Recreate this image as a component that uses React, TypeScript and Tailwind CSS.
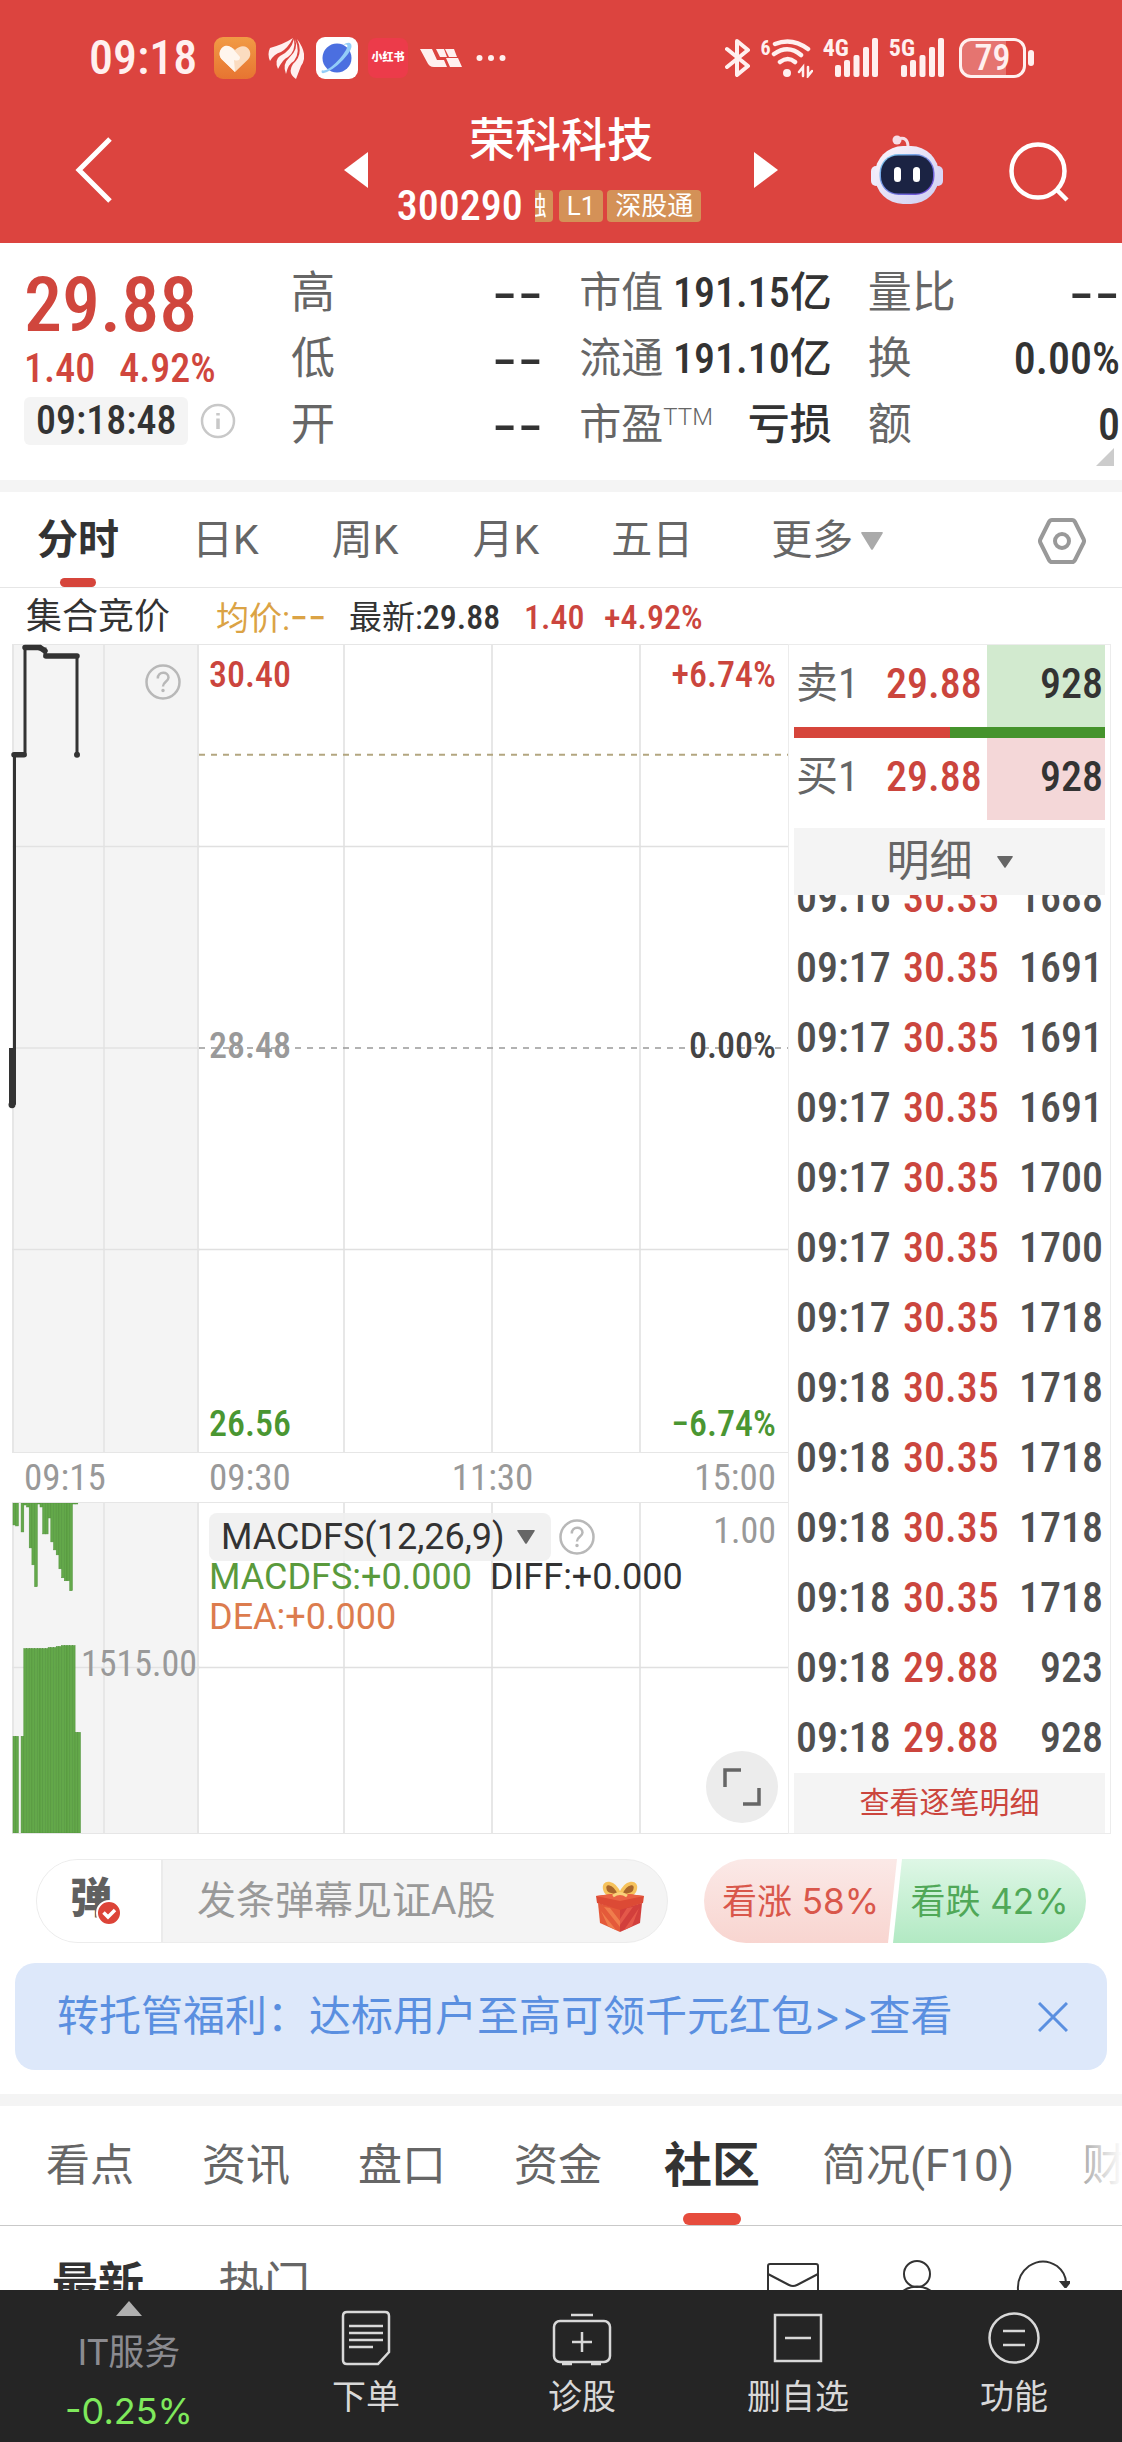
import type { ReactNode } from "react";

type QuoteItem = { label: ReactNode; value: string; dash?: boolean };

const quoteColumns: { size: string; items: QuoteItem[] }[] = [
  {
    size: "text-[44px]",
    items: [
      { label: "高", value: "--", dash: true },
      { label: "低", value: "--", dash: true },
      { label: "开", value: "--", dash: true },
    ],
  },
  {
    size: "text-[42px]",
    items: [
      { label: "市值", value: "191.15亿" },
      { label: "流通", value: "191.10亿" },
      {
        label: (
          <>
            市盈<sup className="relative top-0 align-[14px] text-2xl leading-none font-light font-['Roboto']">TTM</sup>
          </>
        ),
        value: "亏损",
      },
    ],
  },
  {
    size: "text-[44px]",
    items: [
      { label: "量比", value: "--", dash: true },
      { label: "换", value: "0.00%" },
      { label: "额", value: "0" },
    ],
  },
];

const trades: [string, string, string][] = [
  ["09:16", "30.35", "1688"],
  ["09:17", "30.35", "1691"],
  ["09:17", "30.35", "1691"],
  ["09:17", "30.35", "1691"],
  ["09:17", "30.35", "1700"],
  ["09:17", "30.35", "1700"],
  ["09:17", "30.35", "1718"],
  ["09:18", "30.35", "1718"],
  ["09:18", "30.35", "1718"],
  ["09:18", "30.35", "1718"],
  ["09:18", "30.35", "1718"],
  ["09:18", "29.88", "923"],
  ["09:18", "29.88", "928"],
];

const unmatched = [22, 23, 0, 29, 2, 4, 45, 62, 84, 1, 4, 31, 31, 15, 39, 47, 52, 66, 75, 78, 78, 88, 1, 1];
const matched = [97, 97, 0, 97, 185, 185, 185, 185, 185, 185, 185, 185, 185, 186, 186, 186, 187, 187, 188, 188, 188, 188, 188, 101, 101];

function Caret({ className }: { className: string }) {
  return (
    <svg viewBox="0 0 20 16" className={className} aria-hidden="true" preserveAspectRatio="none">
      <path d="M1 0H19Q20.500 0 19.500 1.500L11 15Q10 16.500 9 15L.5 1.500Q-.5 0 1 0Z" fill="currentColor" />
    </svg>
  );
}

function HelpIcon() {
  return (
    <svg viewBox="0 0 36 36" className="size-9" fill="none" stroke="#b8b8b8" strokeWidth="2.500" aria-hidden="true">
      <circle cx="18" cy="18" r="16.500" />
      <path d="M12.800 14.500C12.800 7 23.500 7 23.500 13.500C23.500 17.500 18 17.500 18 22.500" />
      <circle cx="18" cy="26.500" r="1" fill="#b8b8b8" strokeWidth="1.500" />
    </svg>
  );
}

function Signal({ label }: { label: string }) {
  return (
    <div className="flex h-10 items-end">
      <span className="-mr-3.5 self-start text-2xl leading-5 font-bold">{label}</span>
      <svg viewBox="0 0 44 40" className="h-10 w-11" fill="#fff0ef" aria-hidden="true">
        <rect x="0" y="27" width="6" height="12" rx="2" />
        <rect x="9" y="22" width="6" height="17" rx="2" />
        <rect x="18.500" y="17" width="6" height="22" rx="2" />
        <rect x="28" y="9" width="6" height="30" rx="2" />
        <rect x="37" y="0" width="6" height="39" rx="2" />
      </svg>
    </div>
  );
}

function StatusBar() {
  return (
    <div className="flex h-[88px] items-center justify-between pt-7 pr-[88px] pl-[89px] text-[#fff0ef]">
      <div className="flex items-center">
        <span className="w-[125px] text-5xl leading-none font-medium">09:18</span>
        <svg viewBox="0 0 42 42" className="size-[42px]" aria-hidden="true">
          <defs>
            <linearGradient id="heartBg" x1="0" y1="0" x2="0" y2="1">
              <stop offset="0" stopColor="#f19b45" />
              <stop offset="1" stopColor="#e77431" />
            </linearGradient>
          </defs>
          <rect width="42" height="42" rx="9" fill="url(#heartBg)" />
          <path d="M21 35L8 22.500C1 15 11 3 21 13C31 3 41 15 34 22.500Z" fill="#fbdcc0" />
          <path d="M21 35L8 22.500C1 15 11 3 19 12L26 20Q26 25 20 23Z" fill="#fff6ee" />
        </svg>
        <svg viewBox="0 0 36 42" className="ml-3 h-[42px] w-9" fill="#fff0ef" aria-hidden="true">
          <path d="M25 1Q16 7 2 11Q-1 17 2 24Q6 17 13 15Q20 11 25 1Z" />
          <path d="M26 2Q23 14 12 19Q6 23 10 32Q15 22 20 20Q28 14 26 2Z" />
          <path d="M27 2Q31 12 21 21Q14 27 18 37Q20 27 26 24Q33 15 27 2Z" />
          <path d="M29 2Q41 18 33 29L28 42Q19 36 25 27Q36 17 29 2Z" />
        </svg>
        <svg viewBox="0 0 42 42" className="ml-3 size-[42px]" aria-hidden="true">
          <rect width="42" height="42" rx="9" fill="#fff" />
          <circle cx="21" cy="21" r="14.500" fill="#4b6fe0" />
          <path d="M6 33Q4 38 11 35Q22 30 32 17Q38 9 34 6Q31 5 27 8Q34 6 30 13Q24 23 15 30Q8 35 6 33Z" fill="#93cdf8" />
        </svg>
        <span className="ml-2.5 flex size-10 items-center justify-center rounded-lg bg-[#ec3b4a] text-[11px] font-black text-white">
          小红书
        </span>
        <svg viewBox="0 0 42 18" className="ml-3 h-[18px] w-[42px]" fill="#fff0ef" aria-hidden="true">
          <path d="M0 0H12L17 11H24L27 18H14Q9 18 7 13Z" />
          <path d="M16 0H24L27 8H20ZM25 0H34L37 8H29ZM26 9H38L42 18H30Z" />
        </svg>
        <svg viewBox="0 0 30 8" className="ml-3.5 h-2 w-[30px]" fill="#fff0ef" aria-hidden="true">
          <circle cx="3.500" cy="4" r="3" />
          <circle cx="15" cy="4" r="3" />
          <circle cx="26.500" cy="4" r="3" />
        </svg>
      </div>
      <div className="flex items-center">
        <svg viewBox="0 0 26 40" className="h-10 w-[26px]" fill="none" stroke="#fff0ef" strokeWidth="4" strokeLinejoin="round" strokeLinecap="round" aria-hidden="true">
          <path d="M2 11L23 28L12 37V3L23 12L2 29" />
        </svg>
        <span className="ml-2.5 self-start text-xl leading-5 font-bold">6</span>
        <svg viewBox="0 0 42 40" className="h-10 w-[42px]" fill="none" stroke="#fff0ef" strokeWidth="4.500" strokeLinecap="round" aria-hidden="true">
          <path d="M4 6Q21-1 37 11M3 16Q17 6 30 17M9 24Q17 18 24 24" />
          <circle cx="16" cy="35" r="2.500" fill="#fff0ef" strokeWidth="3" />
          <path d="M28 34L32 29V38M37 29V38L41 33" strokeWidth="2.500" />
        </svg>
        <div className="ml-2.5">
          <Signal label="4G" />
        </div>
        <div className="ml-2.5">
          <Signal label="5G" />
        </div>
        <div className="ml-3.5 flex h-10 w-[67px] items-center justify-center rounded-xl border-3 border-[#fff0ef] bg-linear-to-r from-[#e57470] from-72% to-transparent to-72% text-4xl leading-none font-medium">
          79
        </div>
        <span className="ml-0.5 h-4 w-1.5 rounded-sm bg-[#fff0ef]" />
      </div>
    </div>
  );
}

function Robot() {
  return (
    <svg viewBox="0 0 72 72" className="h-[72px] w-[72px]" aria-hidden="true">
      <defs>
        <linearGradient id="shell" x1="0" y1="0" x2="1" y2="1">
          <stop offset="0" stopColor="#fdf6fb" />
          <stop offset="1" stopColor="#cdcdf2" />
        </linearGradient>
        <linearGradient id="visor" x1="0" y1="0" x2="1" y2="1">
          <stop offset="0" stopColor="#7fd3ef" />
          <stop offset="1" stopColor="#6a3bd2" />
        </linearGradient>
      </defs>
      <path d="M27 5Q37 2 37 13" fill="none" stroke="#f6dde6" strokeWidth="3" />
      <circle cx="26" cy="6" r="4.500" fill="#f6dde6" />
      <rect x="0" y="32" width="10" height="20" rx="5" fill="#eeeafa" />
      <rect x="62" y="32" width="10" height="20" rx="5" fill="#d9d6f6" />
      <rect x="4" y="12" width="64" height="58" rx="28" fill="url(#shell)" />
      <rect x="8.500" y="20" width="55" height="41" rx="19" fill="url(#visor)" />
      <rect x="10" y="21.500" width="52" height="38" rx="17" fill="#1b2343" />
      <rect x="23" y="33" width="7" height="15" rx="3.500" fill="#fff" />
      <rect x="42" y="33" width="7" height="15" rx="3.500" fill="#fff" />
    </svg>
  );
}

function TitleBar() {
  return (
    <div className="grid h-[155px] grid-cols-[1fr_434px_1fr] items-center pt-2">
      <button aria-label="返回" className="pl-[74px]">
        <svg viewBox="0 0 40 66" className="h-[66px] w-10" fill="none" stroke="#fff" strokeWidth="5" aria-hidden="true">
          <path d="M36 2L5 33L36 64" />
        </svg>
      </button>
      <div className="flex items-center justify-between">
        <button aria-label="上一只">
          <svg viewBox="0 0 24 36" className="h-9 w-6" fill="#fff" aria-hidden="true">
            <path d="M24 0V36L0 18Z" />
          </svg>
        </button>
        <div className="flex flex-col items-center gap-4">
          <h1 className="text-[46px] leading-[56px] font-medium">荣科科技</h1>
          <div className="mr-6 flex items-center text-[26px] leading-8">
            <span className="mr-3 text-[42px] leading-11 font-medium">300290</span>
            <span className="mr-1.5 flex w-[18px] justify-end overflow-hidden rounded-r bg-[#d49157] pr-1.5">
              <span>融</span>
            </span>
            <span className="mr-1 rounded bg-[#d49157] px-2 font-['Roboto']">L1</span>
            <span className="rounded bg-[#d49157] px-2">深股通</span>
          </div>
        </div>
        <button aria-label="下一只">
          <svg viewBox="0 0 24 36" className="h-9 w-6" fill="#fff" aria-hidden="true">
            <path d="M0 0V36L24 18Z" />
          </svg>
        </button>
      </div>
      <div className="flex items-center justify-end gap-[66px] pr-[53px]">
        <button aria-label="智能助手">
          <Robot />
        </button>
        <button aria-label="搜索">
          <svg viewBox="0 0 60 60" className="mt-1 size-[60px]" fill="none" stroke="#fff" strokeWidth="4.500" aria-hidden="true">
            <circle cx="29" cy="29" r="26.500" />
            <path d="M47 47L58 58" />
          </svg>
        </button>
      </div>
    </div>
  );
}

function Quote() {
  return (
    <section className="relative flex pt-[17px] pr-0.5 pb-[22px] pl-6">
      <div className="flex w-[267px] shrink-0 flex-col items-start pt-[7px] text-[#d0463d]">
        <span className="text-[76px] leading-[76px] font-medium">29.88</span>
        <div className="mt-0.5 flex gap-6 text-[40px] leading-[48px] font-medium">
          <span>1.40</span>
          <span>4.92%</span>
        </div>
        <div className="mt-1 flex items-center gap-3">
          <span className="rounded-md bg-[#f4f4f4] px-3 text-[40px] leading-[48px] font-medium text-[#333]">09:18:48</span>
          <button aria-label="说明">
            <svg viewBox="0 0 36 36" className="size-9" fill="none" stroke="#c8c8c8" strokeWidth="2.500" aria-hidden="true">
              <circle cx="18" cy="18" r="16" />
              <path d="M18 15.500V26M18 10V12.500" strokeWidth="3.500" />
            </svg>
          </button>
        </div>
      </div>
      <div className="grid flex-1 grid-cols-3 gap-x-9 leading-[60px]">
        {quoteColumns.map((column, i) => (
          <dl key={i} className={column.size}>
            {column.items.map((item, j) => (
              <div key={j} className="flex h-[66px] items-center justify-between whitespace-nowrap">
                <dt className="text-[#666]">{item.label}</dt>
                <dd className={item.dash ? "text-[56px] text-[#333] font-['Inter']" : "font-medium text-[#333]"}>
                  {item.value}
                </dd>
              </div>
            ))}
          </dl>
        ))}
      </div>
      <svg viewBox="0 0 18 18" className="absolute right-2 bottom-3.5 size-[18px]" fill="#ccc" aria-hidden="true">
        <path d="M18 0V18H0Z" />
      </svg>
    </section>
  );
}

function PeriodTabs() {
  return (
    <nav className="flex h-24 items-center border-b border-[#e6e6e6] pt-0.5 pr-9 pl-[37px] text-[41px] whitespace-nowrap text-[#666] font-['Roboto','Noto_Sans_CJK_SC',sans-serif]">
      <button className="relative mr-[73px] h-full font-bold text-[#333]">
        分时
        <span className="absolute bottom-0 left-1/2 h-[9px] w-9 -translate-x-1/2 rounded-full bg-[#d6453b]" />
      </button>
      <button className="mr-[73px]">日K</button>
      <button className="mr-[74px]">周K</button>
      <button className="mr-[72px]">月K</button>
      <button className="mr-[78px]">五日</button>
      <button className="flex items-center gap-2">
        更多
        <Caret className="h-[18px] w-[22px] text-[#aaa]" />
      </button>
      <button aria-label="设置" className="ml-auto">
        <svg viewBox="0 0 48 48" className="size-12" fill="none" stroke="#999" strokeWidth="4" strokeLinejoin="round" aria-hidden="true">
          <path d="M14 3H34Q36 3 37 5L45.500 22Q46.500 24 45.500 26L37 43Q36 45 34 45H14Q12 45 11 43L2.500 26Q1.500 24 2.500 22L11 5Q12 3 14 3Z" />
          <circle cx="24" cy="24" r="7" />
        </svg>
      </button>
    </nav>
  );
}

function LatestLine() {
  return (
    <div className="flex h-14 items-center pt-0.5 pl-[26px] text-[34px] leading-10 whitespace-nowrap text-[#333]">
      <span className="w-[190px] text-4xl">集合竞价</span>
      <span className="w-[133px] text-[33px] text-[#dba345]">
        均价:<span className="font-['Inter'] text-[40px] leading-none">--</span>
      </span>
      <span className="w-[175px]">
        <span className="text-[33px]">最新:</span>
        <span className="font-medium">29.88</span>
      </span>
      <span className="w-20 font-medium text-[#cb453d]">1.40</span>
      <span className="font-medium text-[#cb453d]">+4.92%</span>
    </div>
  );
}

function AuctionPrice() {
  return (
    <div className="relative w-[187px] shrink-0 border-x-2 border-y border-[#e6e6e6] bg-[#f4f4f4]">
      <svg viewBox="0 0 188 809" preserveAspectRatio="none" className="absolute inset-0 -ml-0.5 h-full w-[188px] overflow-visible" fill="none" aria-hidden="true">
        <path d="M92 0V809M0 202H188M0 404H188M0 606H188" stroke="#e2e2e2" strokeWidth="1.500" />
        <path d="M-.5 404V461" stroke="#333" strokeWidth="5" />
        <path d="M2.500 461V110H13V2H28V4H33V11H65V110" stroke="#333" strokeWidth="3" />
        <path d="M13 2.500H28L33 6M34 11H65M2 110H12" stroke="#333" strokeWidth="5.500" strokeLinecap="round" />
        <circle cx="65" cy="110" r="3" fill="#333" />
        <circle cx="0" cy="461" r="3.500" fill="#333" />
      </svg>
      <button aria-label="集合竞价说明" className="absolute top-[19px] right-4">
        <HelpIcon />
      </button>
    </div>
  );
}

function MinutePrice() {
  return (
    <div className="relative flex-1 border-y border-[#e6e6e6]">
      <svg viewBox="0 0 589 809" preserveAspectRatio="none" className="absolute inset-0 h-full w-full" fill="none" aria-hidden="true">
        <path d="M145 0V809M293 0V809M441 0V809M0 202H589M0 606H589" stroke="#e0e0e0" strokeWidth="1.500" />
        <path d="M0 110H589" stroke="#b3a680" strokeWidth="2" strokeDasharray="6 6" />
        <path d="M0 404H589" stroke="#999" strokeWidth="1.500" strokeDasharray="6 6" />
      </svg>
      <div className="absolute inset-0 flex flex-col justify-between pt-2.5 pr-3 pb-2 pl-2.5 text-4xl leading-10 font-medium">
        <div className="flex justify-between text-[#cb453d]">
          <span>30.40</span>
          <span>+6.74%</span>
        </div>
        <div className="flex justify-between pb-2 text-[#999]">
          <span>28.48</span>
          <span className="text-[#444]">0.00%</span>
        </div>
        <div className="flex justify-between text-[#4a9632]">
          <span>26.56</span>
          <span>−6.74%</span>
        </div>
      </div>
    </div>
  );
}

function AuctionVolume() {
  return (
    <div className="relative w-[187px] shrink-0 border-x-2 border-y border-[#e6e6e6] bg-[#f4f4f4]">
      <svg viewBox="0 0 188 331" preserveAspectRatio="none" className="absolute inset-0 -ml-0.5 h-full w-[188px]" aria-hidden="true">
        <path d="M92 0V331M0 165H188" stroke="#e2e2e2" strokeWidth="1.500" />
        {unmatched.map((h, i) => (
          <rect key={i} x={1 + i * 2.7} y="0" width="2.700" height={h} fill="#63a84a" stroke="#4f9138" strokeWidth=".5" />
        ))}
        {matched.map((h, i) => (
          <rect key={i} x={1 + i * 2.7} y={331 - h} width="2.700" height={h} fill="#63a84a" stroke="#4f9138" strokeWidth=".5" />
        ))}
      </svg>
      <span className="absolute top-[141px] right-0 text-4xl leading-10 text-[#999]">1515.00</span>
    </div>
  );
}

function MinuteIndicator() {
  return (
    <div className="relative flex-1 border-y border-[#e6e6e6] text-4xl font-['Roboto','Noto_Sans_CJK_SC',sans-serif]">
      <svg viewBox="0 0 589 331" preserveAspectRatio="none" className="absolute inset-0 h-full w-full" aria-hidden="true">
        <path d="M145 0V331M293 0V331M441 0V331M0 165H589" stroke="#e0e0e0" strokeWidth="1.500" />
      </svg>
      <div className="relative pt-2.5 pr-3 pl-2.5">
        <div className="flex items-center">
          <button className="mr-2 flex h-12 items-center gap-3 rounded-lg bg-[#f0f0f0]/90 pr-4 pl-3 text-[#333]">
            MACDFS(12,26,9)
            <Caret className="h-3.5 w-[18px] text-[#666]" />
          </button>
          <button aria-label="指标说明">
            <HelpIcon />
          </button>
          <span className="ml-auto -mt-3 text-[#999] font-['Roboto_Condensed']">1.00</span>
        </div>
        <div className="-mt-1 flex flex-wrap gap-x-[18px] leading-10">
          <span className="text-[#5a9a3c]">MACDFS:+0.000</span>
          <span className="text-[#333]">DIFF:+0.000</span>
          <span className="text-[#dc7c4e]">DEA:+0.000</span>
        </div>
      </div>
      <button aria-label="全屏" className="absolute right-2.5 bottom-2.5 flex size-[72px] items-center justify-center rounded-full bg-[#ececec]">
        <svg viewBox="0 0 38 38" className="size-[38px]" fill="none" stroke="#666" strokeWidth="3.500" aria-hidden="true">
          <path d="M2 19V2H18M36 20V36H20" />
        </svg>
      </button>
    </div>
  );
}

function OrderRow({ name, price, volume, tint }: { name: string; price: string; volume: string; tint: string }) {
  return (
    <div className="grid h-[82px] grid-cols-[92px_1fr_118px] text-[42px] leading-[78px] text-[#333]">
      <span className="pl-0.5 text-[#666]">{name}</span>
      <span className="font-medium text-[#cb453d]">{price}</span>
      <span className={`${tint} pr-0.5 text-right font-medium`}>{volume}</span>
    </div>
  );
}

function OrderPanel() {
  return (
    <aside className="flex w-[323px] shrink-0 flex-col border border-[#ececec] px-[5px]">
      <OrderRow name="卖1" price="29.88" volume="928" tint="bg-[#d2eacf]" />
      <div className="flex h-[11px]">
        <span className="w-1/2 bg-[#d6453b]" />
        <span className="flex-1 bg-[#45932c]" />
      </div>
      <OrderRow name="买1" price="29.88" volume="928" tint="bg-[#f4d7d8]" />
      <button className="mt-2 flex h-[67px] shrink-0 items-center justify-center gap-6 bg-[#f4f4f4] text-[43px] leading-none text-[#666]">
        明细
        <Caret className="h-3 w-4" />
      </button>
      <div className="min-h-0 overflow-hidden">
        <table className="-mt-8 w-full text-[42px] leading-none font-medium text-[#505050]">
          <tbody>
            {trades.map(([time, price, volume], i) => (
              <tr key={i} className="h-[70px]">
                <td className="w-[109px] p-0 pl-0.5">{time}</td>
                <td className="p-0 text-[#cb453d]">{price}</td>
                <td className="p-0 pr-0.5 text-right">{volume}</td>
              </tr>
            ))}
          </tbody>
        </table>
      </div>
      <button className="h-[60px] shrink-0 bg-[#f4f4f4] text-3xl text-[#cb453d]">查看逐笔明细</button>
    </aside>
  );
}

function ChartArea() {
  return (
    <section className="flex pr-[11px] pl-3">
      <div className="flex min-w-0 flex-1 flex-col">
        <div className="flex h-[809px]">
          <AuctionPrice />
          <MinutePrice />
        </div>
        <div className="flex h-[49px] items-center text-[37px] leading-none text-[#999]">
          <span className="w-[187px] pl-3">09:15</span>
          <div className="flex flex-1 justify-between pr-3 pl-2.5">
            <span>09:30</span>
            <span>11:30</span>
            <span>15:00</span>
          </div>
        </div>
        <div className="flex h-[332px]">
          <AuctionVolume />
          <MinuteIndicator />
        </div>
      </div>
      <OrderPanel />
    </section>
  );
}

function Gift() {
  return (
    <svg viewBox="0 0 48 52" className="h-[52px] w-12" aria-hidden="true">
      <path d="M24 14C18-1 6 0 9 9C10 14 18 15 24 14C30 15 38 14 39 9C42 0 30-1 24 14Z" fill="#a8662c" stroke="#f6c25b" strokeWidth="3.500" />
      <path d="M2 22L24 28V51L4 42Z" fill="#e45a3a" />
      <path d="M46 22L24 28V51L44 42Z" fill="#d23f3c" />
      <path d="M5 30L20 49L12 45ZM8 26L24 46V40L14 27Z" fill="#f07d4c" />
      <path d="M43 27L28 49L36 45ZM37 26L24 44V38L31 27Z" fill="#e4584a" />
      <path d="M0 15L24 12L48 15L47 22L24 29L1 22Z" fill="#dc4a35" />
      <path d="M0 15L24 12L48 15L24 20Z" fill="#ea6244" />
      <path d="M17 15Q24 10 31 15" stroke="#f9d27a" strokeWidth="3" fill="none" />
    </svg>
  );
}

function CommentBar() {
  return (
    <div className="flex gap-9 pt-[25px] pr-9 pl-9">
      <div className="flex h-[84px] min-w-0 flex-1 items-center overflow-hidden rounded-full border border-[#ececec] bg-[#f4f4f4]">
        <button aria-label="弹幕开关" className="flex h-full w-[126px] shrink-0 items-center border-r-2 border-[#ebebeb] bg-white pb-1 pl-[33px]">
          <span className="relative text-[42px] leading-none font-black text-[#606060]">
            弹
            <svg viewBox="0 0 26 26" className="absolute -right-2.5 -bottom-1.5 size-[26px]" fill="none" aria-hidden="true">
              <circle cx="13" cy="13" r="12" fill="#dc4438" stroke="#fff" strokeWidth="2" />
              <path d="M7.500 12.500L12 17L19 10" stroke="#fff" strokeWidth="3.500" />
            </svg>
          </span>
        </button>
        <input
          type="text"
          aria-label="发弹幕"
          placeholder="发条弹幕见证A股"
          className="h-full min-w-0 flex-1 bg-transparent pl-[34px] text-[39px] outline-none placeholder:text-[#999] font-['Roboto','Noto_Sans_CJK_SC',sans-serif]"
        />
        <button aria-label="礼物" className="mt-3 mr-[23px]">
          <Gift />
        </button>
      </div>
      <div className="flex h-[84px] w-[382px] shrink-0 overflow-hidden rounded-full text-[35px] font-['Inter','Noto_Sans_CJK_SC',sans-serif]">
        <button className="-mr-1 flex-1 bg-linear-to-b from-[#fbe9e7] to-[#f8d5d0] text-[#d9574b] [clip-path:polygon(0_0,100%_0,calc(100%-9px)_100%,0_100%)]">
          看涨 58%
        </button>
        <button className="flex-1 bg-linear-to-b from-[#def7e6] to-[#b2e9c3] text-[#50a858] [clip-path:polygon(9px_0,100%_0,100%_100%,0_100%)]">
          看跌 42%
        </button>
      </div>
    </div>
  );
}

function Banner() {
  return (
    <div className="mx-[15px] mt-5 mb-6 flex h-[107px] items-center justify-between rounded-[20px] bg-[#dde8fa] pr-[39px] pl-[42px] text-[#5a8fe0]">
      <a href="#welfare" className="text-[42px] leading-[60px] whitespace-nowrap">
        转托管福利：达标用户至高可领千元红包<span className="font-['Inter']">&gt;&gt;</span>查看
      </a>
      <button aria-label="关闭">
        <svg viewBox="0 0 30 30" className="size-[30px]" stroke="currentColor" strokeWidth="3" aria-hidden="true">
          <path d="M1 1L29 29M29 1L1 29" />
        </svg>
      </button>
    </div>
  );
}

function ContentTabs() {
  return (
    <nav className="relative flex h-[120px] items-center gap-[68px] overflow-hidden border-b border-[#c9c9c9] pl-[46px] text-[44px] leading-none whitespace-nowrap text-[#666] font-['Roboto','Noto_Sans_CJK_SC',sans-serif]">
      <button>看点</button>
      <button>资讯</button>
      <button>盘口</button>
      <button>资金</button>
      <button className="relative -mx-1.5 h-full text-5xl font-bold text-[#333]">
        社区
        <span className="absolute bottom-0 left-1/2 h-3 w-[58px] -translate-x-1/2 rounded-full bg-[#e64c3d]" />
      </button>
      <button>简况(F10)</button>
      <button>财务</button>
      <span className="pointer-events-none absolute inset-y-0 right-0 w-[72px] bg-linear-to-r from-white/0 to-white" />
    </nav>
  );
}

function FeedHeader() {
  return (
    <div className="flex h-16 items-start justify-between overflow-hidden pt-[30px] pr-[52px] pl-[52px] text-[46px] leading-[56px] text-[#666]">
      <div className="flex gap-[74px]">
        <button className="font-bold text-[#333]">最新</button>
        <button>热门</button>
      </div>
      <div className="flex pt-1">
        <button aria-label="消息">
          <svg viewBox="0 0 54 54" className="size-[54px]" fill="none" stroke="#333" strokeWidth="2" aria-hidden="true">
            <rect x="2" y="4" width="50" height="42" rx="2" />
            <path d="M2 14L23 25Q27 27 31 25L52 14" />
          </svg>
        </button>
        <button aria-label="我的" className="ml-[70px]">
          <svg viewBox="0 0 54 54" className="size-[54px]" fill="none" stroke="#333" strokeWidth="2" aria-hidden="true">
            <circle cx="27" cy="14" r="13" />
            <path d="M5 52Q6 27 27 26.500Q48 27 49 52" />
          </svg>
        </button>
        <button aria-label="刷新" className="ml-[72px]">
          <svg viewBox="0 0 54 54" className="size-[54px]" fill="none" stroke="#333" strokeWidth="2" aria-hidden="true">
            <path d="M2 30Q1 15 13 6Q27-3 41 6Q50 13 50 23" />
            <path d="M45 22H54L50 27H49Z" fill="#333" />
          </svg>
        </button>
      </div>
    </div>
  );
}

function BottomBar() {
  const item = "flex flex-1 flex-col items-center gap-1.5 pt-5";
  const icon = "h-14 w-[60px]";
  return (
    <footer className="flex h-[152px] bg-[#252525] text-[34px] leading-[50px] text-[#d8d8d8]">
      <button className="flex w-[258px] shrink-0 flex-col items-center pt-[11px] text-4xl font-['Roboto','Noto_Sans_CJK_SC',sans-serif]">
        <svg viewBox="0 0 26 15" className="h-[15px] w-[26px]" fill="#b0b0b0" aria-hidden="true">
          <path d="M13 0L26 15H0Z" />
        </svg>
        <span className="mt-2.5 leading-[54px] text-[#8b8b90]">IT服务</span>
        <span className="leading-[62px] text-[#7fe95c] font-['Inter']">-0.25%</span>
      </button>
      <button className={item}>
        <svg viewBox="0 0 60 56" className={icon} fill="none" stroke="#d8d8d8" strokeWidth="2.500" aria-hidden="true">
          <path d="M11 2H49Q53 2 53 6V42L42 54H11Q7 54 7 50V6Q7 2 11 2Z" />
          <path d="M13 16H47M13 23H47M13 30H47M13 37H37" />
        </svg>
        下单
      </button>
      <button className={item}>
        <svg viewBox="0 0 60 56" className={icon} fill="none" stroke="#d8d8d8" strokeWidth="2.500" aria-hidden="true">
          <rect x="2" y="11" width="56" height="41" rx="6" />
          <path d="M19 5H41M30 22V42M20 32H40M10 54H20M39 54H49" />
        </svg>
        诊股
      </button>
      <button className={item}>
        <svg viewBox="0 0 60 56" className={icon} fill="none" stroke="#d8d8d8" strokeWidth="2.500" aria-hidden="true">
          <rect x="7" y="5" width="46" height="46" />
          <path d="M17 28H43" />
        </svg>
        删自选
      </button>
      <button className={item}>
        <svg viewBox="0 0 60 56" className={icon} fill="none" stroke="#d8d8d8" strokeWidth="2.500" aria-hidden="true">
          <circle cx="30" cy="28" r="24.500" />
          <path d="M19 21H41M19 35H41" />
        </svg>
        功能
      </button>
    </footer>
  );
}

export default function App() {
  return (
    <div className="overflow-hidden bg-white font-['Roboto_Condensed','Noto_Sans_CJK_SC',sans-serif]">
      <header className="bg-[#dc443f] text-white">
        <StatusBar />
        <TitleBar />
      </header>
      <main>
        <Quote />
        <div className="h-3 bg-[#f4f4f4]" />
        <PeriodTabs />
        <LatestLine />
        <ChartArea />
        <CommentBar />
        <Banner />
        <div className="h-3 bg-[#f4f4f4]" />
        <ContentTabs />
        <FeedHeader />
      </main>
      <BottomBar />
    </div>
  );
}
